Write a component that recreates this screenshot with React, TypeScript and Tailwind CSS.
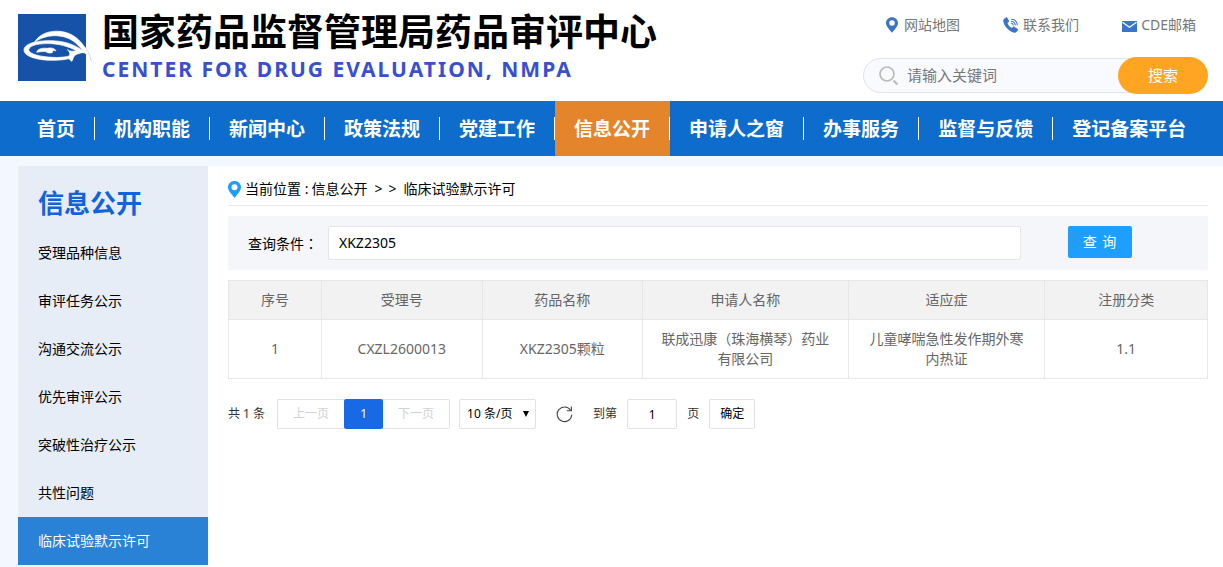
import { useState } from 'react';

const navItems = [
  '首页',
  '机构职能',
  '新闻中心',
  '政策法规',
  '党建工作',
  '信息公开',
  '申请人之窗',
  '办事服务',
  '监督与反馈',
  '登记备案平台',
];

const sideItems = [
  '受理品种信息',
  '审评任务公示',
  '沟通交流公示',
  '优先审评公示',
  '突破性治疗公示',
  '共性问题',
  '临床试验默示许可',
];

const columns = [
  { title: '序号', width: 'w-[9.5%]' },
  { title: '受理号', width: 'w-[16.4%]' },
  { title: '药品名称', width: 'w-[16.4%]' },
  { title: '申请人名称', width: 'w-[21%]' },
  { title: '适应症', width: 'w-[20.1%]' },
  { title: '注册分类', width: 'w-[16.6%]' },
];

const rows = [
  ['1', 'CXZL2600013', 'XKZ2305颗粒', '联成迅康（珠海横琴）药业有限公司', '儿童哮喘急性发作期外寒内热证', '1.1'],
];

function Logo() {
  return (
    <svg viewBox="24 28 222 201" className="h-[67px] w-[74px] shrink-0" aria-hidden="true">
      <rect x="24" y="28" width="204" height="201" fill="#1552a8" />
      <path d="M226 126C236 140 242 154 246 172C238 158 232 150 226 144Z" fill="#c4cbd8" />
      <g fill="#fff" stroke="#fff" strokeWidth="2" strokeLinejoin="round">
        <path d="M74 112C88 88 118 77 150 80C188 84 210 106 226 130C234 143 238 153 240 163C228 148 214 130 197 115C180 100 158 93 132 93C108 94 90 101 74 112Z" />
        <path
          fillRule="evenodd"
          d="M229 146C206 126 174 110 128 108C86 107 43 114 42 136C42 157 88 168 132 167C150 167 168 165 181 161L178 154C162 158 144 159 128 158C92 156 57 149 56 135C59 120 92 116 124 117C160 119 184 130 206 141Z"
        />
        <path d="M172 135C180 141 196 140 206 137L226 142C206 146 196 149 191 157C188 162 189 167 185 170C177 166 175 160 179 149C180 144 177 139 172 135Z" />
        <path d="M80 143C82 133 96 129 112 131C122 128 136 131 138 139C132 136 126 138 127 144C119 146 112 145 108 141C99 140 90 141 80 143Z" />
      </g>
    </svg>
  );
}

function PinIcon({ className }: { className: string }) {
  return (
    <svg viewBox="0 0 13 17" className={className} fill="currentColor" aria-hidden="true">
      <path
        fillRule="evenodd"
        d="M6.500 0C10.100 0 13 2.700 13 6.300C13 10 9.500 12.800 6.500 17C3.500 12.800 0 10 0 6.300C0 2.700 2.900 0 6.500 0ZM6.500 3.300A3 3 0 1 0 6.500 9.300A3 3 0 0 0 6.500 3.300Z"
      />
    </svg>
  );
}

function PhoneIcon() {
  return (
    <svg viewBox="0 0 16 16" className="size-4" aria-hidden="true">
      <path
        fill="#3a74cb"
        d="M1.200 1.700L3 .4c.5-.3 1-.2 1.300.3l1.700 3c.2.500.1 1-.3 1.300l-1.200.9c.6 2 2.200 4 4.300 5l1.200-1c.4-.4 1-.4 1.400-.1l3.300 2.100c.5.300.6.900.2 1.300l-1.500 1.900c-.5.600-1.300.8-2.100.6C5.400 14.100.9 9 .2 4c-.1-.9.200-1.700 1-2.300Z"
      />
      <path
        fill="none"
        stroke="#3a74cb"
        strokeWidth="1.100"
        strokeLinecap="round"
        d="M8.600 2.200c3.100.2 5.400 2.500 5.700 5.800M8.500 4.300c2 .2 3.400 1.600 3.700 3.600M8.400 6.300c.9.100 1.500.7 1.700 1.600"
      />
    </svg>
  );
}

function MailIcon() {
  return (
    <svg viewBox="0 0 15 11" className="mt-[3px] h-[11px] w-[15px]" aria-hidden="true">
      <rect width="15" height="11" rx="0.500" fill="#3a74cb" />
      <path d="M0.500 1.200L7.500 6.200L14.500 1.200" fill="none" stroke="#fff" strokeWidth="1.200" />
    </svg>
  );
}

function SearchIcon() {
  return (
    <svg viewBox="0 0 20 20" className="size-5 shrink-0" fill="none" stroke="#bbbbbb" aria-hidden="true">
      <circle cx="8" cy="8" r="7" strokeWidth="1.700" />
      <path d="M14.500 14.500L18.500 18.500" strokeWidth="2.200" />
    </svg>
  );
}

function RefreshIcon() {
  return (
    <svg viewBox="0 0 17 17" className="size-[17px]" fill="none" stroke="#444" aria-hidden="true">
      <path d="M14.600 4.200A7.300 7.300 0 1 0 15.800 8.800" strokeWidth="1.100" />
      <path d="M10.800 4.700H15.400V0.500" strokeWidth="1.100" />
    </svg>
  );
}

export default function App() {
  const [query, setQuery] = useState('XKZ2305');
  const [page, setPage] = useState('1');

  return (
    <div className="min-h-screen bg-white font-['Noto_Sans','Noto_Sans_CJK_SC',sans-serif] text-sm text-black flex flex-col">
      <header className="flex items-start justify-between pr-[15px] pb-[7px] pl-[18px]">
        <a href="#home" className="flex pt-[14px]">
          <Logo />
          <span className="ml-[10px] flex flex-col">
            <span className="-mt-1 text-[37px] leading-[44px] font-bold whitespace-nowrap">
              国家药品监督管理局药品审评中心
            </span>
            <span className="text-[21px] leading-[30px] font-bold tracking-[2px] whitespace-nowrap text-[#3850d0]">
              CENTER FOR DRUG EVALUATION, NMPA
            </span>
          </span>
        </a>

        <div className="w-[345px] shrink-0 pt-[15px]">
          <div className="flex h-5 items-center justify-between pr-3 pl-[23px] text-[#777]">
            <a href="#map" className="flex items-center gap-[6px]">
              <PinIcon className="h-4 w-3 text-[#3a74cb]" />
              网站地图
            </a>
            <a href="#contact" className="flex items-center gap-1">
              <PhoneIcon />
              联系我们
            </a>
            <a href="#mail" className="flex items-center gap-1">
              <MailIcon />
              CDE邮箱
            </a>
          </div>
          <form
            className="mt-[22px] flex h-[37px] items-center"
            onSubmit={(e) => e.preventDefault()}
          >
            <label className="-mr-6 flex h-[35px] flex-1 items-center gap-2 rounded-l-full border border-[#e2e4e8] bg-[#f9faff] pl-[15px]">
              <SearchIcon />
              <input
                type="text"
                aria-label="请输入关键词"
                placeholder="请输入关键词"
                className="w-full bg-transparent text-[15px] outline-none placeholder:text-[#777]"
              />
            </label>
            <button
              type="submit"
              className="relative h-[37px] w-[90px] rounded-full bg-[#ffa522] text-[15px] text-white"
            >
              搜索
            </button>
          </form>
        </div>
      </header>

      <nav className="flex h-[55px] bg-[#0e6dcc] pl-[18px]">
        {navItems.map((item, i) => (
          <a
            key={item}
            href={`#nav-${i}`}
            className={`flex items-center text-[19px] font-bold whitespace-nowrap text-white ${
              item === '信息公开' ? 'bg-[#e4852c]' : ''
            }`}
          >
            <span className="px-[19px] pt-[2px]">{item}</span>
            <span className={`h-[23px] w-px ${i < navItems.length - 1 ? 'bg-white' : ''}`} />
          </a>
        ))}
      </nav>

      <div className="flex flex-1 flex-col bg-[#f3f7ff] pt-[10px]">
        <div className="flex flex-1">
          <aside className="ml-[18px] w-[190px] shrink-0">
            <div className="bg-[#e6edf6]">
              <h2 className="pt-[18px] pb-[7px] pl-5 text-[26px] leading-[38px] font-bold text-[#1262db]">
                信息公开
              </h2>
              <ul>
                {sideItems.map((item, i) => (
                  <li key={item}>
                    <a
                      href={`#side-${i}`}
                      className={`block h-12 pl-5 leading-[48px] ${
                        item === '临床试验默示许可' ? 'bg-[#2a82d7] text-white' : ''
                      }`}
                    >
                      {item}
                    </a>
                  </li>
                ))}
              </ul>
            </div>
          </aside>

          <main className="min-w-0 flex-1 bg-white pr-[15px] pl-5">
            <div className="flex h-10 items-center border-b border-[#e6e6e6] pt-[6px]">
              <PinIcon className="mt-[2px] mr-1 h-[17px] w-[13px] text-[#1e9fff]" />
              <span>当前位置 : </span>
              <a href="#open" className="ml-[3px]">
                信息公开
              </a>
              <span className="ml-[7px]">&gt;</span>
              <span className="ml-[6px]">&gt;</span>
              <a href="#trial" className="ml-[7px]">
                临床试验默示许可
              </a>
            </div>

            <form
              className="mt-[10px] flex h-[54px] items-start bg-[#f4f6fa] pt-[10px] pr-[76px] pl-5"
              onSubmit={(e) => e.preventDefault()}
            >
              <label htmlFor="query" className="w-20 leading-[34px] whitespace-nowrap">
                查询条件
                <span lang="zh-TW" className="font-['Noto_Sans_CJK_TC',sans-serif]">
                  ：
                </span>
              </label>
              <input
                id="query"
                type="text"
                value={query}
                onChange={(e) => setQuery(e.target.value)}
                className="h-[34px] min-w-0 flex-1 rounded-xs border border-[#e6e6e6] bg-white px-[10px] pb-[2px] outline-none"
              />
              <button
                type="submit"
                className="ml-[47px] h-8 w-16 rounded-xs bg-[#1e9fff] tracking-[1px] whitespace-nowrap text-white"
              >
                查 询
              </button>
            </form>

            <table className="mt-[10px] w-full table-fixed border-collapse text-center text-[#666]">
              <thead>
                <tr className="h-[39px] bg-[#f2f2f2]">
                  {columns.map((c) => (
                    <th key={c.title} className={`border border-[#e6e6e6] font-normal ${c.width}`}>
                      {c.title}
                    </th>
                  ))}
                </tr>
              </thead>
              <tbody>
                {rows.map((row) => (
                  <tr key={row[1]}>
                    {row.map((cell) => (
                      <td key={cell} className="border border-[#e6e6e6] px-[15px] py-[9px] leading-5">
                        {cell}
                      </td>
                    ))}
                  </tr>
                ))}
              </tbody>
            </table>

            <div className="mt-5 flex h-[30px] items-center text-xs text-[#333]">
              <span>共 1 条</span>
              <div className="ml-3 flex h-[30px]">
                <button type="button" disabled className="w-[67px] rounded-l-xs border border-r-0 border-[#e2e2e2] text-[#d2d2d2]">
                  上一页
                </button>
                <button type="button" className="w-[39px] rounded-xs bg-[#1769e6] text-white">
                  1
                </button>
                <button type="button" disabled className="w-[67px] rounded-r-xs border border-l-0 border-[#e2e2e2] text-[#d2d2d2]">
                  下一页
                </button>
              </div>
              <div className="relative ml-[9px] h-[30px] w-[77px]">
                <select
                  aria-label="每页条数"
                  className="size-full appearance-none rounded-xs border border-[#e2e2e2] bg-white pl-[7px] text-black"
                >
                  <option>10 条/页</option>
                </select>
                <svg
                  viewBox="0 0 6 6"
                  className="pointer-events-none absolute top-3 right-[7px] size-[6px]"
                  aria-hidden="true"
                >
                  <path d="M0 0H6L3 6Z" fill="#000" />
                </svg>
              </div>
              <button type="button" aria-label="刷新" className="ml-5">
                <RefreshIcon />
              </button>
              <label htmlFor="page" className="ml-5">
                到第
              </label>
              <input
                id="page"
                type="text"
                value={page}
                onChange={(e) => setPage(e.target.value)}
                className="ml-[10px] h-[30px] w-[50px] rounded-xs border border-[#e2e2e2] bg-white text-center text-black outline-none"
              />
              <span className="ml-[10px]">页</span>
              <button
                type="button"
                className="ml-[10px] h-[30px] w-[46px] rounded-xs border border-[#e2e2e2] bg-white text-black"
              >
                确定
              </button>
            </div>
          </main>
        </div>
      </div>
    </div>
  );
}
